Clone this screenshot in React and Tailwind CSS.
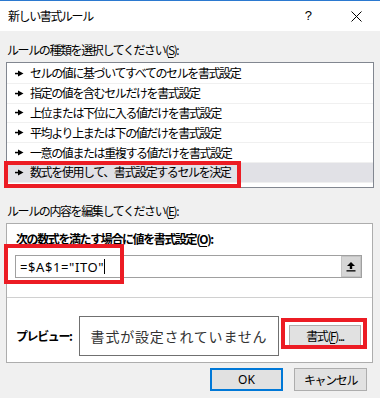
import React from 'react';

const rules = [
  'セルの値に基づいてすべてのセルを書式設定',
  '指定の値を含むセルだけを書式設定',
  '上位または下位に入る値だけを書式設定',
  '平均より上または下の値だけを書式設定',
  '一意の値または重複する値だけを書式設定',
  '数式を使用して、書式設定するセルを決定',
];

const Bullet = () => (
  <svg width="9" height="7" viewBox="0 0 9 7" className="shrink-0">
    <rect x="0" y="2.8" width="4" height="1.5" fill="#000" />
    <path d="M3 0.5 L8.5 3.5 L3 6.5 Z" fill="#000" />
  </svg>
);

const App = () => {
  return (
    <div className="relative w-[380px] h-[398px] overflow-hidden bg-[#f0f0f0] text-black font-['Noto_Sans_CJK_JP',sans-serif] text-[12px] tracking-[-1.4px]">
      {/* title bar */}
      <div className="flex items-center h-[31px] bg-white border-t border-[#2b79d0]">
        <span className="pl-[8px] leading-[16px]">新しい書式ルール</span>
        <span className="ml-auto mr-[39px] text-[13px] tracking-normal font-['Liberation_Sans',sans-serif]">?</span>
        <svg width="11" height="11" viewBox="0 0 11 11" className="mr-[18px]">
          <path d="M0.5 0.5 L10.5 10.5 M10.5 0.5 L0.5 10.5" stroke="#000" strokeWidth="1" />
        </svg>
      </div>

      <div className="px-[6px]">
        <div className="mt-[11px] pl-[1px] leading-[16px]">
          ルールの種類を選択してください(<span className="underline underline-offset-2">S</span>):
        </div>

        <div className="mt-[4px] w-[368px] h-[126px] border border-[#828790] bg-white pt-[1px]">
          {rules.map((r, i) => (
            <div
              key={r}
              className={`flex items-center gap-[6px] h-[19.8px] pl-[8px] border-b border-[#f0f0f0] ${i === rules.length - 1 ? 'bg-[#e1e1e6]' : ''}`}
            >
              <Bullet />
              <span className="leading-[16px]">{r}</span>
            </div>
          ))}
        </div>

        <div className="mt-[15px] pl-[1px] leading-[16px]">
          ルールの内容を編集してください(<span className="underline underline-offset-2">E</span>):
        </div>

        <div className="mt-[4px] w-[367px] h-[140px] border border-[#adadad] bg-white">
          <div className="pt-[7px] pl-[9px] font-bold leading-[16px]">
            次の数式を満たす場合に値を書式設定(<span className="underline underline-offset-2">O</span>):
          </div>
          <div className="mt-[8px] ml-[8px] w-[347px] h-[23px] border border-[#a0a0a0] flex items-center">
            <span className="pl-[4px] text-[13px] tracking-[0.6px] font-['Noto_Sans',sans-serif] leading-[16px]">=$A$1="ITO"</span>
            <span className="w-[1px] h-[15px] bg-black" />
            <div className="ml-auto w-[20px] h-[21px] bg-[#d6d6d6] border border-[#c4c4c4] flex items-center justify-center">
              <svg width="10" height="11" viewBox="0 0 10 11">
                <path d="M5 1 L9 5 L6.2 5 L6.2 8 L3.8 8 L3.8 5 L1 5 Z" fill="#000" />
                <rect x="0.5" y="9.2" width="9" height="1.3" fill="#000" />
              </svg>
            </div>
          </div>
          <div className="mt-[19px] border-t border-[#d0d0d0]" />
          <div className="flex items-center mt-[18px] pl-[9px]">
            <span className="w-[63px] font-bold leading-[16px]">プレビュー:</span>
            <div className="w-[200px] h-[40px] border border-[#707070] flex items-center justify-center text-[14px] tracking-[0.8px] text-[#333]">
              書式が設定されていません
            </div>
            <button className="ml-[10px] w-[72px] h-[23px] bg-[#e1e1e1] border border-[#adadad] flex items-center justify-center leading-[16px]">
              書式(<span className="underline underline-offset-2">F</span>)...
            </button>
          </div>
        </div>

        <div className="flex justify-end gap-[11px] mt-[5px] pr-[7px]">
          <button className="w-[73px] h-[23px] bg-[#e1e1e1] border-2 border-[#0078d7] flex items-center justify-center tracking-normal font-['Noto_Sans',sans-serif] text-[12px]">
            OK
          </button>
          <button className="w-[73px] h-[23px] bg-[#e1e1e1] border border-[#adadad] flex items-center justify-center leading-[16px]">
            キャンセル
          </button>
        </div>
      </div>

      {/* red annotation boxes */}
      <div className="absolute left-[4px] top-[161px] w-[237px] h-[27px] border-4 border-[#ec1c24]" />
      <div className="absolute left-[4px] top-[244px] w-[120px] h-[40px] border-4 border-[#ec1c24]" />
      <div className="absolute left-[281px] top-[318px] w-[86px] h-[31px] border-4 border-[#ec1c24]" />
    </div>
  );
};

export default App;
